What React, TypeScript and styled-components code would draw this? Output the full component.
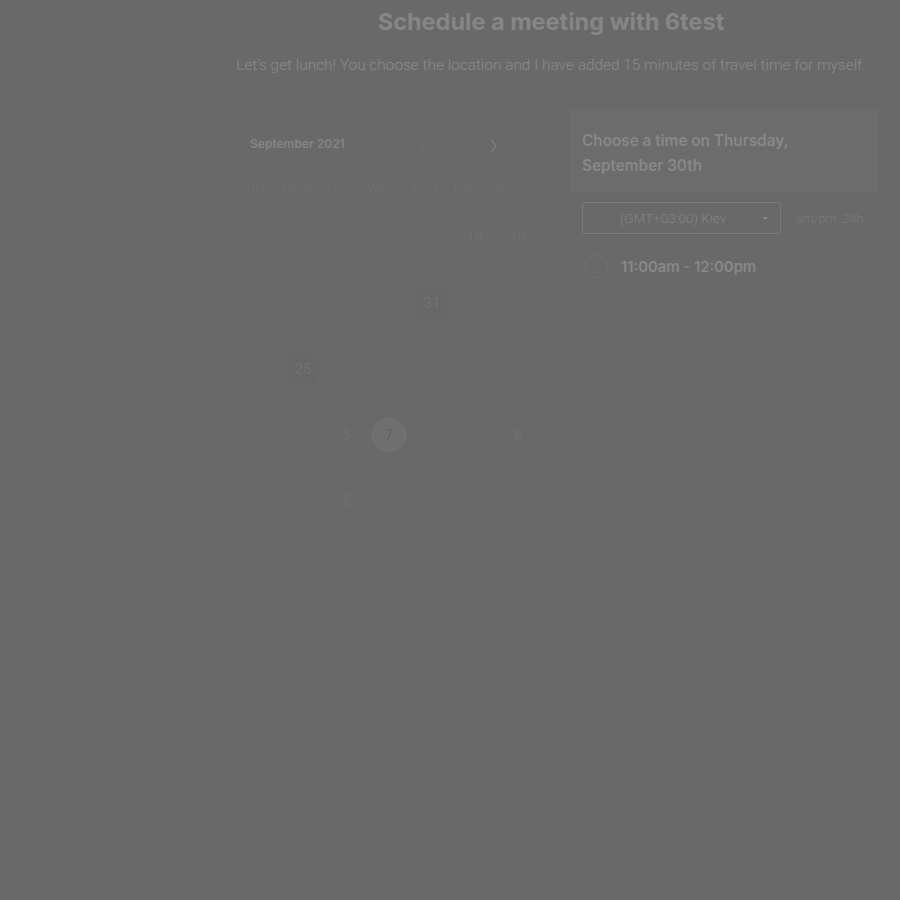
import React from "react";
import styled, { createGlobalStyle } from "styled-components";

const Global = createGlobalStyle`
  html, body { margin: 0; padding: 0; background: #696969; }
  body { font-family: Roboto, "Liberation Sans", sans-serif; }
`;

const Page = styled.div`
  width: 900px;
  height: 900px;
  background: #696969;
  box-sizing: border-box;
  padding-left: 220px;
`;

const Main = styled.div`
  width: 662px;
  display: flex;
  flex-direction: column;
  align-items: center;
`;

const Title = styled.h1`
  margin: 8px 0 0;
  font-family: Inter, sans-serif;
  font-weight: 700;
  font-size: 23.5px;
  line-height: 28px;
  color: #868686;
`;

const Subtitle = styled.p`
  margin: 20px 0 0;
  font-family: Roboto, sans-serif;
  font-weight: 300;
  font-size: 15.4px;
  line-height: 18px;
  color: #8b8b8b;
`;

const Body = styled.div`
  align-self: stretch;
  display: flex;
  margin-top: 33px;
  padding-left: 10px;
`;

const Calendar = styled.div`
  width: 310px;
  flex-shrink: 0;
  display: flex;
  flex-direction: column;
`;

const CalHeader = styled.div`
  display: flex;
  align-items: center;
  height: 30px;
  padding-left: 20px;
  margin-top: 21px;
`;

const MonthLabel = styled.div`
  flex-shrink: 0;
  font-family: Inter, sans-serif;
  font-weight: 600;
  font-size: 12px;
  color: #858585;
  width: 166px;
`;

const Arrow = styled.div<{ $bright?: boolean }>`
  flex-shrink: 0;
  width: 16px;
  height: 16px;
  display: flex;
  align-items: center;
  justify-content: center;
  margin-top: 6px;
  margin-left: ${(p) => (p.$bright ? "53px" : "0")};
  color: ${(p) => (p.$bright ? "#7e7e7e" : "#6e6e6e")};
`;

const Grid = styled.div`
  display: grid;
  grid-template-columns: repeat(7, 43px);
  margin-left: 8.5px;
`;

const DayName = styled.div`
  font-family: Roboto, sans-serif;
  font-weight: 300;
  font-size: 13px;
  letter-spacing: 0.5px;
  color: #6f6f6f;
  height: 20px;
  line-height: 20px;
  margin-top: 21px;
  margin-bottom: 40px;
`;

const Cell = styled.div`
  height: 66px;
  display: flex;
  justify-content: center;
  align-items: flex-start;
`;

const Num = styled.div<{ $kind?: "plain" | "dark" | "light" | "dash" }>`
  width: 34px;
  height: 34px;
  margin-top: -19px;
  border-radius: 50%;
  display: flex;
  align-items: center;
  justify-content: center;
  box-sizing: border-box;
  font-family: Roboto, sans-serif;
  font-size: 15px;
  font-weight: 400;
  color: ${(p) =>
    p.$kind === "dark" ? "#737373" : p.$kind === "light" ? "#606060" : "#707070"};
  background: ${(p) =>
    p.$kind === "dark" ? "#676767" : p.$kind === "light" ? "#6f6f6f" : "transparent"};
  border: ${(p) => (p.$kind === "light" ? "1px solid #767676" : "none")};
`;

const Dash = styled.div`
  width: 10px;
  height: 1px;
  background: #6d6d6d;
  margin-top: 4px;
`;

const Right = styled.div`
  margin: 3px 0 0 30px;
  width: 308px;
  display: flex;
  flex-direction: column;
`;

const Heading = styled.div`
  background: #6c6c6c;
  padding: 18px 12px 15px;
  font-family: Inter, sans-serif;
  font-weight: 600;
  font-size: 15.3px;
  line-height: 25px;
  color: #888888;
`;

const Controls = styled.div`
  display: flex;
  align-items: center;
  margin: 9px 0 0 12px;
`;

const Select = styled.div`
  width: 199px;
  height: 32px;
  box-sizing: border-box;
  border: 1px solid #7a7a7a;
  border-radius: 2px;
  display: flex;
  align-items: center;
  padding-left: 37px;
  padding-right: 12px;
  font-family: Roboto, sans-serif;
  font-weight: 300;
  font-size: 13.5px;
  color: #858585;
`;

const SelectText = styled.span`
  flex: 1;
`;

const Caret = styled.span`
  width: 0;
  height: 0;
  border-left: 3px solid transparent;
  border-right: 3px solid transparent;
  border-top: 3px solid #8a8a8a;
`;

const Format = styled.div`
  margin-left: 15px;
  font-family: Roboto, sans-serif;
  font-weight: 300;
  font-size: 12.4px;
  color: #7b7b7b;
  word-spacing: 3px;
`;

const Slot = styled.div`
  display: flex;
  align-items: center;
  margin: 21px 0 0 3px;
`;

const Radio = styled.div`
  width: 23px;
  height: 23px;
  margin-left: 12px;
  box-sizing: border-box;
  border-radius: 50%;
  border: 1px solid #727272;
`;

const SlotText = styled.div`
  margin-left: 13px;
  font-family: Inter, sans-serif;
  font-weight: 600;
  font-size: 14.8px;
  color: #888888;
`;

type C = { t?: string; k?: "plain" | "dark" | "light" | "dash" } | null;

const rows: C[][] = [
  [null, { k: "dash" }, { k: "dash" }, { k: "dash" }, { k: "dash" }, { t: "19" }, { t: "19" }],
  [null, null, null, null, { t: "31", k: "dark" }, null, null],
  [null, { t: "25", k: "dark" }, { k: "dash" }, null, null, null, null],
  [null, null, { t: "5" }, { t: "7", k: "light" }, null, null, { t: "5" }],
  [null, null, { t: "5" }, { k: "dash" }, null, null, null],
];

const days = ["SUN", "MON", "TUE", "WED", "THU", "FRI", "SAT"];

export default function App() {
  return (
    <>
      <Global />
      <Page>
        <Main>
          <Title>Schedule a meeting with 6test</Title>
          <Subtitle>
            Let’s get lunch! You choose the location and I have added 15 minutes of travel time for myself.
          </Subtitle>
          <Body>
            <Calendar>
              <CalHeader>
                <MonthLabel>September 2021</MonthLabel>
                <Arrow>
                  <svg width="10" height="14" viewBox="0 0 10 14" fill="none" stroke="currentColor" strokeWidth="1.3">
                    <path d="M7 1L2 7l5 6" />
                  </svg>
                </Arrow>
                <Arrow $bright>
                  <svg width="10" height="14" viewBox="0 0 10 14" fill="none" stroke="currentColor" strokeWidth="1.3">
                    <path d="M3 1l5 6-5 6" />
                  </svg>
                </Arrow>
              </CalHeader>
              <Grid>
                {days.map((d) => (
                  <DayName key={d}>{d}</DayName>
                ))}
                {rows.map((r, i) =>
                  r.map((c, j) => (
                    <Cell key={`${i}-${j}`}>
                      {c && c.k === "dash" ? (
                        <Dash />
                      ) : c ? (
                        <Num $kind={c.k}>{c.t}</Num>
                      ) : null}
                    </Cell>
                  ))
                )}
              </Grid>
            </Calendar>
            <Right>
              <Heading>
                Choose a time on Thursday,
                <br />
                September 30th
              </Heading>
              <Controls>
                <Select>
                  <SelectText>(GMT+03:00) Kiev</SelectText>
                  <Caret />
                </Select>
                <Format>am/pm 24h</Format>
              </Controls>
              <Slot>
                <Radio />
                <SlotText>11:00am - 12:00pm</SlotText>
              </Slot>
            </Right>
          </Body>
        </Main>
      </Page>
    </>
  );
}
